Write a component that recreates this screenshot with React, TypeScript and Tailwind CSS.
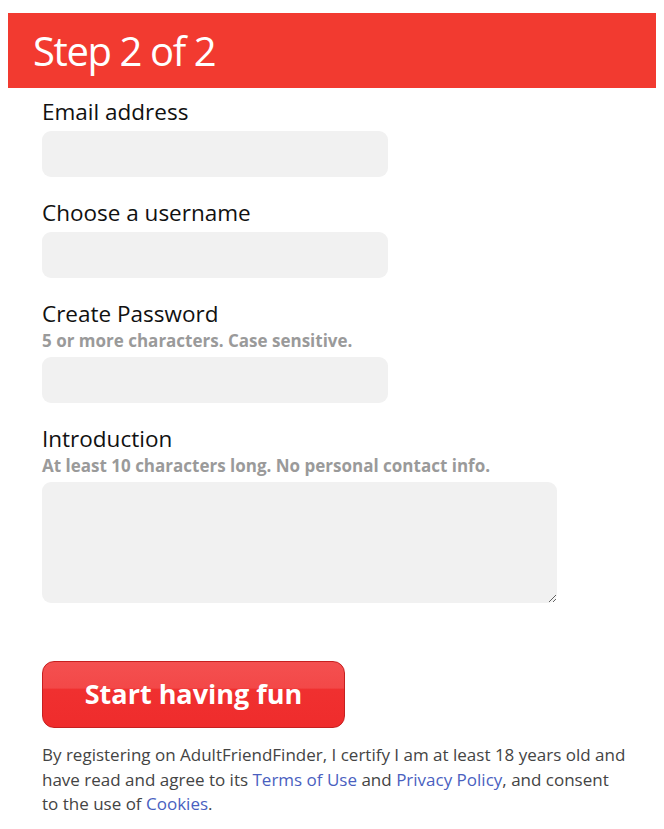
import React from 'react';

const font = { fontFamily: '"Open Sans", "Liberation Sans", sans-serif' };

interface FieldProps {
  label: string;
  hint?: string;
  className?: string;
  children: React.ReactNode;
}

const Field: React.FC<FieldProps> = ({ label, hint, className, children }) => (
  <div className={className}>
    <label className="block text-[22.5px] leading-[28px] font-medium text-[#111]">{label}</label>
    {hint && <div className="mt-[2px] text-[17px] leading-[22px] font-bold text-[#9a9a9a]">{hint}</div>}
    <div className="mt-[5px]">{children}</div>
  </div>
);

const inputCls = 'block h-[46px] w-[346px] rounded-[9px] bg-[#f1f1f1] px-3 text-[16px] outline-none';

export default function App() {
  return (
    <div className="min-h-[829px] w-[664px] bg-white pt-[13px]" style={font}>
      <div className="mx-[8px] flex h-[75px] items-center bg-[#f23a30] pl-[25px]">
        <h1 className="text-[40px] leading-none font-normal text-white tracking-[-1.4px]">Step 2 of 2</h1>
      </div>

      <form className="pl-[42px] pt-[10px]">
        <Field label="Email address">
          <input type="email" className={inputCls} />
        </Field>

        <Field label="Choose a username" className="mt-[22px]">
          <input type="text" className={inputCls} />
        </Field>

        <Field label="Create Password" hint="5 or more characters. Case sensitive." className="mt-[22px]">
          <input type="password" className={inputCls} />
        </Field>

        <Field label="Introduction" hint="At least 10 characters long. No personal contact info." className="mt-[22px]">
          <textarea className="block h-[121px] w-[515px] rounded-[9px] bg-[#f1f1f1] px-3 py-2 text-[16px] outline-none resize-y" />
        </Field>

        <button
          type="button"
          className="mt-[58px] block h-[67px] w-[303px] rounded-[12px] border border-[#c62020] bg-[linear-gradient(to_bottom,#f45050_0%,#f34848_40%,#f03030_42%,#ef2c2c_100%)] text-[27px] font-bold text-white"
        >
          Start having fun
        </button>

        <p className="mt-[15px] w-[585px] text-[17px] leading-[24.5px] text-[#444]">
          By registering on AdultFriendFinder, I certify I am at least 18 years old and have read and agree to its{' '}
          <a href="#" className="text-[#4a5fbf]">Terms of Use</a> and{' '}
          <a href="#" className="text-[#4a5fbf]">Privacy Policy</a>, and consent to the use of{' '}
          <a href="#" className="text-[#4a5fbf]">Cookies</a>.
        </p>
      </form>
    </div>
  );
}
